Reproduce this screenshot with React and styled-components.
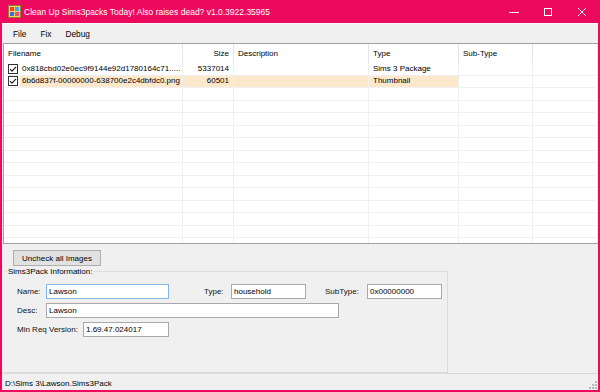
import React from 'react';
import styled, { createGlobalStyle } from 'styled-components';

const GlobalStyle = createGlobalStyle`
  html, body {
    margin: 0;
    padding: 0;
    background: #ffffff;
  }
  body {
    font-family: 'Liberation Sans', Arial, sans-serif;
    font-size: 8px;
    color: #000;
  }
`;

const ACCENT = '#eb0a5d';

const columns = [
  { key: 'name', title: 'Filename', width: 179 },
  { key: 'size', title: 'Size', width: 51, right: true },
  { key: 'desc', title: 'Description', width: 135 },
  { key: 'type', title: 'Type', width: 90 },
  { key: 'sub', title: 'Sub-Type', width: 74 },
  { key: 'rest', title: '', width: 65 },
];

const files = [
  {
    name: '0x818cbd02e0ec9f9144e92d1780164c71.....',
    size: '5337014',
    desc: '',
    type: 'Sims 3 Package',
    sub: '',
    checked: true,
  },
  {
    name: '6b6d837f-00000000-638700e2c4dbfdc0.png',
    size: '60501',
    desc: '',
    type: 'Thumbnail',
    sub: '',
    checked: true,
    selected: true,
  },
];

const AppIcon = () => (
  <svg width="13" height="13" viewBox="0 0 13 13">
    <rect x="0.5" y="0.5" width="12" height="12" fill="#f6d36b" stroke="#9a7b2a" />
    <rect x="2" y="2" width="4" height="4" fill="#e8452c" />
    <rect x="7" y="2" width="4" height="4" fill="#48a6e8" />
    <rect x="2" y="7" width="4" height="4" fill="#3b6fd6" />
    <rect x="7" y="7" width="4" height="4" fill="#e94f7c" />
  </svg>
);

const CheckBox = () => (
  <svg width="10" height="10" viewBox="0 0 10 10">
    <rect x="0.5" y="0.5" width="9" height="9" fill="#fff" stroke="#333" />
    <path d="M2 5.2 L4 7.2 L8 2.8" fill="none" stroke="#222" strokeWidth="1.2" />
  </svg>
);

const Grip = () => (
  <svg width="9" height="9" viewBox="0 0 9 9">
    {[
      [7, 1],
      [4, 4],
      [7, 4],
      [1, 7],
      [4, 7],
      [7, 7],
    ].map(([x, y]) => (
      <rect key={`${x}-${y}`} x={x} y={y} width="2" height="2" fill="#b8b8b8" />
    ))}
  </svg>
);

const App = () => {
  const emptyRows = Array.from({ length: 14 });

  return (
    <>
      <GlobalStyle />
      <Window>
        <TitleBar>
          <TitleIcon>
            <AppIcon />
          </TitleIcon>
          <TitleText>Clean Up Sims3packs Today! Also raises dead? v1.0.3922.35965</TitleText>
          <WinButtons>
            <WinButton>
              <svg width="10" height="10" viewBox="0 0 10 10">
                <path d="M0 5.5 H10" stroke="#fff" strokeWidth="1" />
              </svg>
            </WinButton>
            <WinButton>
              <svg width="10" height="10" viewBox="0 0 10 10">
                <rect x="1.5" y="1.5" width="7" height="7" fill="none" stroke="#fff" />
              </svg>
            </WinButton>
            <WinButton>
              <svg width="10" height="10" viewBox="0 0 10 10">
                <path d="M1 1 L9 9 M9 1 L1 9" stroke="#fff" strokeWidth="1" />
              </svg>
            </WinButton>
          </WinButtons>
        </TitleBar>

        <Body>
          <MenuBar>
            <MenuItem>File</MenuItem>
            <MenuItem>Fix</MenuItem>
            <MenuItem>Debug</MenuItem>
          </MenuBar>

          <ListView>
            <HeaderRow>
              {columns.map((col) => (
                <HeaderCell key={col.key} $width={col.width} $right={col.right}>
                  {col.title}
                </HeaderCell>
              ))}
            </HeaderRow>
            {files.map((file) => (
              <Row key={file.name}>
                {columns.map((col) => (
                  <Cell
                    key={col.key}
                    $width={col.width}
                    $right={col.right}
                    $selected={file.selected && col.key !== 'sub' && col.key !== 'rest'}
                    $first={col.key === 'name'}
                  >
                    {col.key === 'name' ? (
                      <>
                        <CheckWrap>
                          <CheckBox />
                        </CheckWrap>
                        <CellText $selected={file.selected}>{file.name}</CellText>
                      </>
                    ) : (
                      file[col.key]
                    )}
                  </Cell>
                ))}
              </Row>
            ))}
            {emptyRows.map((_, i) => (
              <Row key={i}>
                {columns.map((col) => (
                  <Cell key={col.key} $width={col.width} />
                ))}
              </Row>
            ))}
          </ListView>

          <BottomPanel>
            <PushButton>Uncheck all Images</PushButton>
            <GroupBox>
              <Legend>Sims3Pack Information:</Legend>
              <FieldRow>
                <FieldLabel $width={29}>Name:</FieldLabel>
                <TextInput $width={123} $focused>Lawson</TextInput>
                <FieldLabel $width={27} $gap={35}>Type:</FieldLabel>
                <TextInput $width={75}>household</TextInput>
                <FieldLabel $width={42} $gap={19}>SubType:</FieldLabel>
                <TextInput $width={75}>0x00000000</TextInput>
              </FieldRow>
              <FieldRow>
                <FieldLabel $width={29}>Desc:</FieldLabel>
                <TextInput $width={293}>Lawson</TextInput>
              </FieldRow>
              <FieldRow>
                <FieldLabel $width={66}>Min Req Version:</FieldLabel>
                <TextInput $width={86}>1.69.47.024017</TextInput>
              </FieldRow>
            </GroupBox>
          </BottomPanel>

          <StatusBar>
            <StatusText>D:\Sims 3\Lawson.Sims3Pack</StatusText>
            <GripWrap>
              <Grip />
            </GripWrap>
          </StatusBar>
        </Body>
      </Window>
    </>
  );
};

export default App;

const Window = styled.div`
  width: 600px;
  height: 392px;
  display: flex;
  flex-direction: column;
  background: ${ACCENT};
  box-sizing: border-box;
  overflow: hidden;
`;

const TitleBar = styled.div`
  height: 23px;
  flex: 0 0 23px;
  display: flex;
  align-items: center;
  color: #fff;
`;

const TitleIcon = styled.div`
  width: 13px;
  height: 13px;
  margin: 0 3px 0 8px;
  display: flex;
`;

const TitleText = styled.div`
  flex: 1;
  font-size: 8.5px;
  white-space: nowrap;
`;

const WinButtons = styled.div`
  display: flex;
  height: 100%;
  padding-right: 1px;
`;

const WinButton = styled.div`
  width: 34px;
  height: 100%;
  display: flex;
  align-items: center;
  justify-content: center;
`;

const Body = styled.div`
  flex: 1;
  display: flex;
  flex-direction: column;
  margin: 0 2px 2px 2px;
  background: #f0f0f0;
  min-height: 0;
`;

const MenuBar = styled.div`
  height: 19px;
  flex: 0 0 19px;
  display: flex;
  align-items: center;
  padding-left: 4px;
  background: #f0f0f0;
  border-top: 1px solid #fbfbfb;
`;

const MenuItem = styled.div`
  padding: 0 7px;
  font-size: 8.3px;
`;

const ListView = styled.div`
  height: 201px;
  flex: 0 0 201px;
  background: #fff;
  border: 1px solid #a0a0a0;
  border-right: none;
  margin-left: 1px;
  overflow: hidden;
  box-sizing: border-box;
`;

const HeaderRow = styled.div`
  display: flex;
  height: 19px;
  align-items: center;
`;

const HeaderCell = styled.div`
  width: ${(p) => p.$width}px;
  flex: 0 0 ${(p) => p.$width}px;
  box-sizing: border-box;
  height: 100%;
  display: flex;
  align-items: center;
  justify-content: ${(p) => (p.$right ? 'flex-end' : 'flex-start')};
  padding: 0 4px 0 4px;
  border-right: 1px solid #e5e5e5;
  white-space: nowrap;
`;

const Row = styled.div`
  display: flex;
  height: 12.5px;
`;

const Cell = styled.div`
  width: ${(p) => p.$width}px;
  flex: 0 0 ${(p) => p.$width}px;
  box-sizing: border-box;
  display: flex;
  align-items: center;
  justify-content: ${(p) => (p.$right ? 'flex-end' : 'flex-start')};
  padding: ${(p) => (p.$first ? '0' : '0 4px')};
  border-right: 1px solid #f0f0f0;
  border-bottom: 1px solid #f0f0f0;
  background: ${(p) => (p.$selected && !p.$first ? '#fde8cc' : 'transparent')};
  white-space: nowrap;
  overflow: hidden;
  line-height: 12px;
`;

const CheckWrap = styled.div`
  display: flex;
  width: 14px;
  flex: 0 0 14px;
  justify-content: center;
  padding-left: 2px;
`;

const CellText = styled.div`
  flex: 1;
  height: 100%;
  display: flex;
  align-items: center;
  padding-left: 2px;
  background: ${(p) => (p.$selected ? '#fde8cc' : 'transparent')};
  overflow: hidden;
`;

const BottomPanel = styled.div`
  flex: 1;
  display: flex;
  flex-direction: column;
  align-items: flex-start;
  padding: 6px 0 0 3px;
  min-height: 0;
`;

const PushButton = styled.div`
  margin-left: 8px;
  width: 88px;
  height: 16px;
  box-sizing: border-box;
  background: #e1e1e1;
  border: 1px solid #adadad;
  display: flex;
  align-items: center;
  justify-content: center;
  white-space: nowrap;
`;

const GroupBox = styled.fieldset`
  margin: 1px 0 0 0;
  padding: 8px 0 0 12px;
  width: 443px;
  flex: 1;
  box-sizing: border-box;
  border: 1px solid #dcdcdc;
  border-left: none;
  display: flex;
  flex-direction: column;
  gap: 4px;
`;

const Legend = styled.legend`
  padding: 0 1px;
  margin-left: -10px;
`;

const FieldRow = styled.div`
  display: flex;
  align-items: center;
  height: 15px;
`;

const FieldLabel = styled.div`
  width: ${(p) => p.$width}px;
  flex: 0 0 ${(p) => p.$width}px;
  margin-left: ${(p) => p.$gap || 0}px;
  white-space: nowrap;
  color: #111;
`;

const TextInput = styled.div`
  width: ${(p) => p.$width}px;
  flex: 0 0 ${(p) => p.$width}px;
  height: 15px;
  box-sizing: border-box;
  border: 1px solid ${(p) => (p.$focused ? '#86b6e4' : '#a9a9a9')};
  background: #fff;
  padding-left: 2px;
  display: flex;
  align-items: center;
  white-space: nowrap;
`;

const StatusBar = styled.div`
  height: 17px;
  flex: 0 0 17px;
  border-top: 1px solid #dadada;
  display: flex;
  align-items: flex-end;
  justify-content: space-between;
  padding-left: 3px;
  box-sizing: border-box;
`;

const StatusText = styled.span`
  padding-bottom: 2px;
`;

const GripWrap = styled.div`
  display: flex;
  margin: 0 1px 1px 0;
`;
